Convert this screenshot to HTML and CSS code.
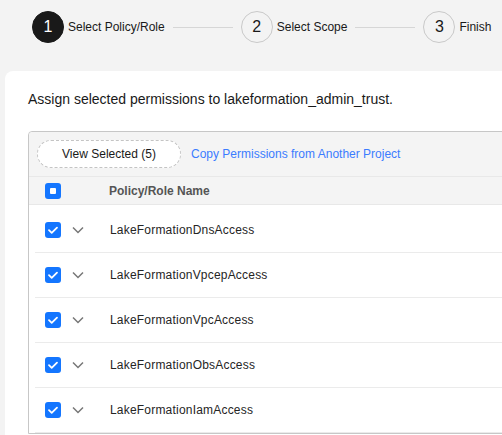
FILE: index.html
```html
<!DOCTYPE html>
<html>
<head>
<meta charset="utf-8">
<link rel="stylesheet" href="styles.css">
</head>
<body>
<div class="steps">
  <div class="step active"><span class="num">1</span><span class="label">Select Policy/Role</span></div>
  <div class="line"></div>
  <div class="step"><span class="num">2</span><span class="label">Select Scope</span></div>
  <div class="line"></div>
  <div class="step"><span class="num">3</span><span class="label">Finish</span></div>
</div>
<div class="card">
  <p class="intro">Assign selected permissions to lakeformation_admin_trust.</p>
  <div class="table">
    <div class="toolbar">
      <button class="view-btn">View Selected (5)</button>
      <a class="link">Copy Permissions from Another Project</a>
    </div>
    <div class="head">
      <span class="cb indeterminate"></span>
      <span class="head-title">Policy/Role Name</span>
    </div>
    <div class="rows">
      <div class="row"><span class="cb checked"><svg viewBox="0 0 16 16"><path d="M4 8.2l2.7 2.6L12 5.6" /></svg></span><svg class="chev" viewBox="0 0 12 8"><path d="M1 1.5l5 5 5-5"/></svg><span class="name">LakeFormationDnsAccess</span></div>
      <div class="row"><span class="cb checked"><svg viewBox="0 0 16 16"><path d="M4 8.2l2.7 2.6L12 5.6" /></svg></span><svg class="chev" viewBox="0 0 12 8"><path d="M1 1.5l5 5 5-5"/></svg><span class="name">LakeFormationVpcepAccess</span></div>
      <div class="row"><span class="cb checked"><svg viewBox="0 0 16 16"><path d="M4 8.2l2.7 2.6L12 5.6" /></svg></span><svg class="chev" viewBox="0 0 12 8"><path d="M1 1.5l5 5 5-5"/></svg><span class="name">LakeFormationVpcAccess</span></div>
      <div class="row"><span class="cb checked"><svg viewBox="0 0 16 16"><path d="M4 8.2l2.7 2.6L12 5.6" /></svg></span><svg class="chev" viewBox="0 0 12 8"><path d="M1 1.5l5 5 5-5"/></svg><span class="name">LakeFormationObsAccess</span></div>
      <div class="row"><span class="cb checked"><svg viewBox="0 0 16 16"><path d="M4 8.2l2.7 2.6L12 5.6" /></svg></span><svg class="chev" viewBox="0 0 12 8"><path d="M1 1.5l5 5 5-5"/></svg><span class="name">LakeFormationIamAccess</span></div>
    </div>
  </div>
</div>
</body>
</html>
```

FILE: styles.css
```css
html, body {
  margin: 0;
  padding: 0;
  background: #f3f3f3;
  font-family: "Liberation Sans", Arial, sans-serif;
  color: #191919;
  overflow: hidden;
  height: 435px;
}

.steps {
  display: flex;
  align-items: center;
  padding: 11px 0 0 32px;
  height: 32px;
}

.step {
  display: flex;
  align-items: center;
  gap: 4px;
}

.num {
  width: 30px;
  height: 30px;
  border: 1px solid #c9c9c9;
  border-radius: 50%;
  display: flex;
  align-items: center;
  justify-content: center;
  font-size: 16px;
  color: #191919;
}

.step.active .num {
  background: #191919;
  border-color: #191919;
  color: #fff;
}

.label {
  font-size: 12px;
  color: #191919;
}

.line {
  width: 60px;
  height: 1px;
  background: #d6d6d6;
  margin: 0 8px;
}

.card {
  margin: 28px 0 0 5px;
  width: 620px;
  height: 400px;
  background: #fff;
  border-radius: 8px;
  padding: 18px 0 0 23px;
  box-sizing: border-box;
}

.intro {
  margin: 0;
  font-size: 14px;
  line-height: 20px;
  color: #191919;
}

.table {
  margin-top: 22px;
  border: 1px solid #c7c7c7;
  border-radius: 4px 0 0 0;
  background: #fff;
}

.toolbar {
  background: #f4f4f4;
  padding: 8px 0 8px 8px;
  display: flex;
  align-items: center;
  border-radius: 4px 0 0 0;
  border-bottom: 1px solid #e8e8e8;
}

.view-btn {
  width: 144px;
  height: 28px;
  border: 1px dashed #c4c4c4;
  border-radius: 14px;
  background: #fff;
  font-family: inherit;
  font-size: 12px;
  color: #191919;
  padding: 0;
}

.link {
  margin-left: 10px;
  font-size: 12px;
  color: #3b7cff;
}

.head {
  display: flex;
  align-items: center;
  height: 27px;
  background: #f4f4f4;
  padding-left: 16px;
  border-bottom: 1px solid #e8e8e8;
}

.head-title {
  margin-left: 48px;
  font-size: 12px;
  font-weight: bold;
  color: #555;
}

.rows {
  padding-top: 3px;
}

.row {
  display: flex;
  align-items: center;
  height: 44px;
  margin-left: 6px;
  padding-left: 10px;
  border-bottom: 1px solid #ebebeb;
}

.cb {
  width: 16px;
  height: 16px;
  border-radius: 3px;
  background: #1476ff;
  display: flex;
  align-items: center;
  justify-content: center;
  flex: none;
}

.cb svg {
  width: 16px;
  height: 16px;
  fill: none;
  stroke: #fff;
  stroke-width: 1.8;
  stroke-linecap: round;
  stroke-linejoin: round;
}

.cb.indeterminate::after {
  content: "";
  width: 6px;
  height: 6px;
  background: #fff;
  border-radius: 1px;
}

.chev {
  width: 12px;
  height: 8px;
  margin-left: 11px;
  fill: none;
  stroke: #777;
  stroke-width: 1.5;
}

.name {
  margin-left: 26px;
  font-size: 12px;
  letter-spacing: 0.2px;
  color: #252525;
}
```
